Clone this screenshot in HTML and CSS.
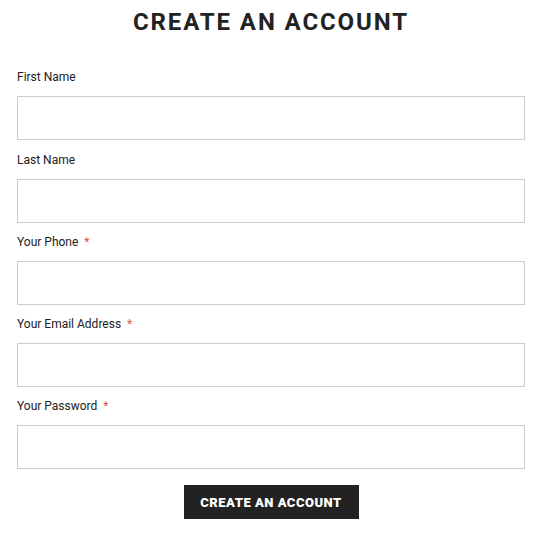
FILE: index.html
```html
<!DOCTYPE html>
<html lang="en">
<head>
<meta charset="utf-8">
<title>Create an Account</title>
<link rel="stylesheet" href="styles.css">
</head>
<body>
<div class="page">
  <h1 class="title">CREATE AN ACCOUNT</h1>
  <form class="form">
    <div class="field">
      <label class="label">First Name</label>
      <input class="input" type="text">
    </div>
    <div class="field">
      <label class="label">Last Name</label>
      <input class="input" type="text">
    </div>
    <div class="field">
      <label class="label">Your Phone <span class="req">*</span></label>
      <input class="input" type="tel">
    </div>
    <div class="field">
      <label class="label">Your Email Address <span class="req">*</span></label>
      <input class="input" type="email">
    </div>
    <div class="field">
      <label class="label">Your Password <span class="req">*</span></label>
      <input class="input" type="password">
    </div>
    <div class="actions">
      <button class="btn" type="button">CREATE AN ACCOUNT</button>
    </div>
  </form>
</div>
</body>
</html>
```
FILE: styles.css
```css
* { box-sizing: border-box; }
html, body { margin: 0; padding: 0; background: #fff; }
body { font-family: Roboto, "Liberation Sans", Arial, sans-serif; color: #222; }
.page { padding: 0 16px 0 17px; }
.title {
  margin: 8px 0 0;
  font-size: 24px;
  line-height: 28px;
  font-weight: 700;
  letter-spacing: 1.9px;
  text-align: center;
  color: #222;
}
.form { display: flex; flex-direction: column; margin-top: 32px; }
.field { display: flex; flex-direction: column; margin-bottom: 10px; }
.field:first-child { margin-bottom: 11px; }
.label {
  display: block;
  font-size: 12px;
  line-height: 18px;
  color: #222;
  margin-bottom: 10px;
}
.req { color: #d9534f; margin-left: 3px; }
.input {
  display: block;
  width: 100%;
  height: 44px;
  border: 1px solid #cccccc;
  background: #fff;
  padding: 0 10px;
  font: inherit;
  outline: none;
}
.actions { display: flex; justify-content: center; margin-top: 6px; }
.btn {
  width: 175px;
  height: 34px;
  background: #222;
  color: #fff;
  border: 0;
  font-family: Roboto, "Liberation Sans", Arial, sans-serif;
  font-size: 13px;
  font-weight: 900;
  letter-spacing: 0.5px;
  cursor: pointer;
}
```
